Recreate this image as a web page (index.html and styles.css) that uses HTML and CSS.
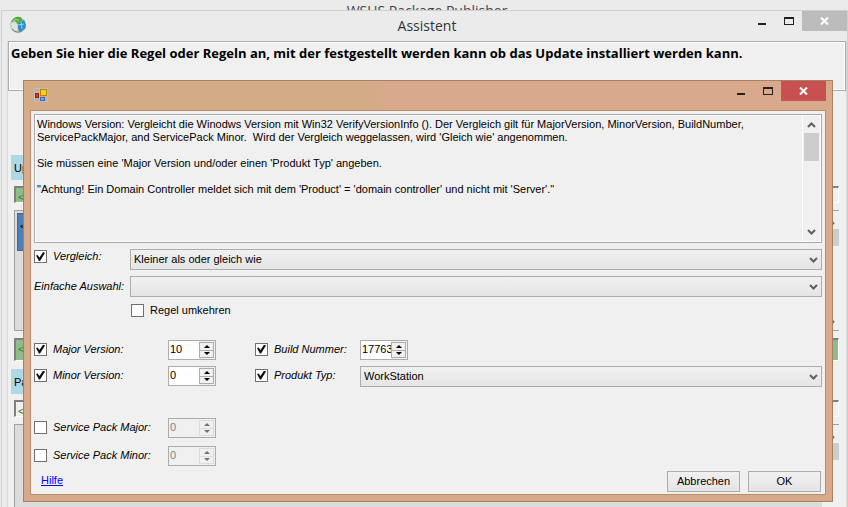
FILE: index.html
```html
<!DOCTYPE html>
<html lang="de">
  <head>
    <meta charset="UTF-8" />
    <meta name="viewport" content="width=device-width, initial-scale=1.0" />
    <title>Assistent</title>
    <link rel="stylesheet" href="styles.css">
  </head>
  <body>
    <div class="owner-title">WSUS Package Publisher</div>

    <main class="assistant">
      <header class="titlebar">
        <svg class="app-icon" viewBox="0 0 18 18" aria-hidden="true">
          <circle cx="9" cy="9" r="8" fill="#c3cac4" />
          <path d="M2 6 Q5 0 11 1 Q14 2 13 6 L9 8 L6 5 Z" fill="#4fae35" />
          <path d="M10 6 L15 4 Q18 9 16 13 L11 16 L8 11 Z" fill="#2b8fc4" />
          <path d="M2 8 L6 6 L9 10 L8 15 Q3 14 2 8Z" fill="#dfe3dd" />
          <path d="M12 5 L13 13 M9 9 L15 8" stroke="#8fd4ee" fill="none" />
          <path d="M3 13 Q7 18 13 15" stroke="#77807c" fill="none" />
          <path d="M4 5 L7 3 L10 5" stroke="#b4df7a" fill="none" />
        </svg>
        <h1 class="title">Assistent</h1>
        <div class="window-buttons">
          <button type="button" aria-label="Minimieren"><span class="min-glyph"></span></button>
          <button type="button" aria-label="Maximieren"><span class="max-glyph"></span></button>
          <button type="button" class="close" aria-label="Schließen">
            <svg viewBox="0 0 9 8"><path d="M1 0.5 L8 7.5 M8 0.5 L1 7.5" /></svg>
          </button>
        </div>
      </header>
      <div class="assistant-body">
        <p class="intro">Geben Sie hier die Regel oder Regeln an, mit der festgestellt werden kann ob das Update installiert werden kann.</p>
        <section class="rules">
          <h2 class="section-title">Up</h2>
          <div class="field short half">&lt;</div>
          <div class="list">
            <div class="list-item">&lt;</div>
            <div class="mini-scroll">
              <svg viewBox="0 0 9 6"><path d="M1 5 L4.500 1.500 L8 5" /></svg>
              <div class="mini-thumb"></div>
              <svg viewBox="0 0 9 6"><path d="M1 1 L4.500 4.500 L8 1" /></svg>
            </div>
          </div>
          <div class="field green">&lt;</div>
          <h2 class="section-title">Pa</h2>
          <div class="field short">&lt;</div>
          <div class="list last">
            <div class="mini-scroll">
              <svg viewBox="0 0 9 6"><path d="M1 5 L4.500 1.500 L8 5" /></svg>
              <div class="mini-thumb"></div>
            </div>
          </div>
        </section>
      </div>
    </main>

    <div class="dialog" role="dialog" aria-label="Windows Version">
      <header class="titlebar">
        <svg class="form-icon" viewBox="0 0 14 14" aria-hidden="true">
          <path d="M0.500 0.500H13.500V13.500H0.500Z M0.500 4.500H5.500 M5.500 0.500V13.500 M0.500 9.500H13.500 M10.500 9V13" fill="none" stroke="#b9bec0" />
          <rect x="6.500" y="1.500" width="6" height="6" fill="#ffd21f" stroke="#b98300" />
          <rect x="1.500" y="5.500" width="3" height="4" fill="#d93a28" stroke="#9e1d12" />
          <rect x="6.500" y="9.500" width="4" height="3" fill="#6fa5f5" stroke="#3569c7" />
        </svg>
        <div class="window-buttons">
          <button type="button" aria-label="Minimieren"><span class="min-glyph"></span></button>
          <button type="button" aria-label="Maximieren"><span class="max-glyph"></span></button>
          <button type="button" class="close" aria-label="Schließen">
            <svg viewBox="0 0 9 8"><path d="M1 0.5 L8 7.5 M8 0.5 L1 7.5" /></svg>
          </button>
        </div>
      </header>

      <form class="dialog-body">
        <div class="description">
          <textarea readonly aria-label="Beschreibung">
Windows Version: Vergleicht die Winodws Version mit Win32 VerifyVersionInfo (). Der Vergleich gilt für MajorVersion, MinorVersion, BuildNumber,
ServicePackMajor, and ServicePack Minor.  Wird der Vergleich weggelassen, wird 'Gleich wie' angenommen.

Sie müssen eine 'Major Version und/oder einen 'Produkt Typ' angeben.

"Achtung! Ein Domain Controller meldet sich mit dem 'Product' = 'domain controller' und nicht mit 'Server'."</textarea>
          <div class="scrollbar">
            <svg viewBox="0 0 9 6"><path d="M1 5 L4.500 1.500 L8 5" /></svg>
            <div class="thumb"></div>
            <svg class="down" viewBox="0 0 9 6"><path d="M1 1 L4.500 4.500 L8 1" /></svg>
          </div>
        </div>

        <div class="compare">
          <div class="check">
            <input type="checkbox" id="useCompare" checked />
            <label for="useCompare">Vergleich:</label>
          </div>
          <select aria-label="Vergleich">
            <option>Kleiner als oder gleich wie</option>
          </select>
          <label class="plain-label" for="simple">Einfache Auswahl:</label>
          <select id="simple">
            <option></option>
          </select>
          <div class="check invert">
            <input type="checkbox" id="invert" />
            <label for="invert">Regel umkehren</label>
          </div>
        </div>

        <div class="versions">
          <div class="check">
            <input type="checkbox" id="useMajor" checked />
            <label for="useMajor">Major Version:</label>
          </div>
          <div class="spinner">
            <input type="number" value="10" aria-label="Major Version" />
            <div class="spin-buttons">
              <button type="button" aria-label="Mehr"><span class="up"></span></button>
              <button type="button" aria-label="Weniger"><span class="dn"></span></button>
            </div>
          </div>
          <div class="check">
            <input type="checkbox" id="useBuild" checked />
            <label for="useBuild">Build Nummer:</label>
          </div>
          <div class="spinner">
            <input type="number" value="17763" aria-label="Build Nummer" />
            <div class="spin-buttons">
              <button type="button" aria-label="Mehr"><span class="up"></span></button>
              <button type="button" aria-label="Weniger"><span class="dn"></span></button>
            </div>
          </div>

          <div class="check">
            <input type="checkbox" id="useMinor" checked />
            <label for="useMinor">Minor Version:</label>
          </div>
          <div class="spinner">
            <input type="number" value="0" aria-label="Minor Version" />
            <div class="spin-buttons">
              <button type="button" aria-label="Mehr"><span class="up"></span></button>
              <button type="button" aria-label="Weniger"><span class="dn"></span></button>
            </div>
          </div>
          <div class="check">
            <input type="checkbox" id="useProduct" checked />
            <label for="useProduct">Produkt Typ:</label>
          </div>
          <select aria-label="Produkt Typ">
            <option>WorkStation</option>
          </select>
        </div>

        <div class="versions service-packs">
          <div class="check">
            <input type="checkbox" id="useSpMajor" />
            <label for="useSpMajor">Service Pack Major:</label>
          </div>
          <div class="spinner disabled">
            <input type="number" value="0" aria-label="Service Pack Major" disabled />
            <div class="spin-buttons">
              <button type="button" aria-label="Mehr" disabled><span class="up"></span></button>
              <button type="button" aria-label="Weniger" disabled><span class="dn"></span></button>
            </div>
          </div>
          <div class="check second-pack">
            <input type="checkbox" id="useSpMinor" />
            <label for="useSpMinor">Service Pack Minor:</label>
          </div>
          <div class="spinner disabled">
            <input type="number" value="0" aria-label="Service Pack Minor" disabled />
            <div class="spin-buttons">
              <button type="button" aria-label="Mehr" disabled><span class="up"></span></button>
              <button type="button" aria-label="Weniger" disabled><span class="dn"></span></button>
            </div>
          </div>
        </div>

        <footer class="actions">
          <a href="#hilfe">Hilfe</a>
          <button type="button" class="btn">Abbrechen</button>
          <button type="submit" class="btn">OK</button>
        </footer>
      </form>
    </div>
  </body>
</html>
```

FILE: styles.css
```css
:root {
  --face: #f0f0f0;
  --frame: #ebebeb;
  --line: #acacac;
  --accent: #d9a98b;
  --accent-dark: #a97f65;
}
* {
  box-sizing: border-box;
}
body {
  margin: 0;
  height: 100vh;
  overflow: hidden;
  position: relative;
  display: flex;
  flex-direction: column;
  background: var(--frame);
  color: #000;
  font-family: "Liberation Sans", Arial, sans-serif;
  font-size: 11px;
  line-height: 13px;
}
input,
select,
textarea,
button {
  font: inherit;
  color: inherit;
  margin: 0;
  border-radius: 0;
}
.owner-title {
  flex: none;
  height: 10px;
  padding-top: 2px;
  padding-left: 6px;
  overflow: hidden;
  text-align: center;
  font: 14px/18px "Open Sans", sans-serif;
  color: #444;
}

/* window chrome */
.titlebar {
  flex: none;
  display: flex;
  align-items: flex-start;
  height: 30px;
}
.title {
  flex: 1;
  margin: 0;
  padding-left: 79px;
  text-align: center;
  font: 14px/30px "Open Sans", sans-serif;
  color: #333;
}
.window-buttons {
  display: flex;
  margin-left: auto;
}
.window-buttons button {
  display: flex;
  justify-content: center;
  width: 27px;
  height: 20px;
  padding: 6px 0 0;
  border: 0;
  background: none;
}
.window-buttons .close {
  width: 45px;
  background: #bcbcbc;
}
.close svg {
  width: 9px;
  height: 8px;
  stroke: #fff;
  stroke-width: 2;
}
.min-glyph {
  width: 8px;
  height: 2px;
  margin-top: 6px;
  background: #222;
}
.max-glyph {
  width: 10px;
  height: 8px;
  border: 1px solid #222;
  border-top-width: 2px;
}

/* assistant window */
.assistant {
  flex: 1;
  min-height: 0;
  display: flex;
  flex-direction: column;
  overflow: hidden;
  margin-left: 1px;
  border-top: 1px solid #cfcfcf;
  border-left: 1px solid #cfcfcf;
  border-right: 1px solid #cfcfcf;
}
.app-icon {
  width: 18px;
  height: 18px;
  margin: 5px 0 0 7px;
}
.assistant-body {
  flex: 1;
  min-height: 0;
  display: flex;
  flex-direction: column;
  margin-left: 5px;
  border-left: 1px solid #d8d8d8;
  border-right: 1px solid #d8d8d8;
  background: var(--face);
}
.intro {
  flex: none;
  height: 50px;
  margin: 0;
  padding: 3px 2px;
  border: 1px solid var(--line);
  outline: 1px solid #fff;
  outline-offset: -2px;
  font-family: "Open Sans", "Liberation Sans", sans-serif;
  font-size: 13px;
  line-height: 16px;
  font-weight: bold;
  white-space: nowrap;
}
.rules {
  flex: 1;
  min-height: 0;
  display: flex;
  flex-direction: column;
  padding: 64px 7px 0 3px;
}
.section-title {
  flex: none;
  width: 160px;
  height: 25px;
  margin: 0;
  padding-left: 3px;
  background: #add8e6;
  font-size: 11px;
  font-weight: normal;
  line-height: 26px;
}
.field {
  flex: none;
  height: 23px;
  margin: 7px 0 8px 3px;
  padding-left: 2px;
  border: 1px solid #fff;
  border-top: 2px solid #808080;
  border-left: 2px solid #808080;
  background: var(--face);
  color: #228b22;
  line-height: 18px;
}
.field.short {
  height: 17px;
  margin: 6px 0 7px 3px;
}
.field.half {
  background: linear-gradient(to right, #8fbc8b 50%, var(--face) 50%);
}
.field.green {
  background: #8fbc8b;
}
.list {
  flex: none;
  display: flex;
  height: 121px;
  margin-left: 3px;
  border: 1px solid #a0a0a0;
  border-right: 0;
  background: #dcdcdc;
}
.list.last {
  flex: 1;
  min-height: 0;
  overflow: hidden;
  border-bottom: 0;
}
.list-item {
  width: 200px;
  height: 38px;
  margin: 2px;
  padding: 6px 2px;
  border: 1px solid #606060;
  background: #4a80b8;
}
.mini-scroll {
  width: 17px;
  margin-left: auto;
  padding-top: 8px;
  background: var(--face);
}
.mini-scroll svg {
  display: block;
  width: 9px;
  height: 6px;
  margin: 0 auto 4px;
}
.mini-thumb {
  height: 17px;
  margin-bottom: 74px;
  background: #cdcdcd;
}
.mini-scroll svg,
.scrollbar svg {
  fill: none;
  stroke: #606060;
  stroke-width: 2;
}

/* rule dialog */
.dialog {
  position: absolute;
  top: 80px;
  right: 15px;
  bottom: 5px;
  left: 23px;
  display: flex;
  flex-direction: column;
  padding: 0 6px 6px;
  border: 1px solid var(--accent-dark);
  background: var(--accent);
}
.dialog .titlebar {
  height: 29px;
  margin-left: -6px;
  background: linear-gradient(to right, #d4ab87 358px, var(--accent) 358px);
}
.form-icon {
  width: 14px;
  height: 14px;
  margin: 7px 0 0 10px;
}
.dialog .close {
  background: #c75050;
}
.dialog-body {
  flex: 1;
  min-height: 0;
  padding: 3px;
  border: 1px solid #b88d70;
  background: var(--face);
}
.description {
  display: flex;
  height: 129px;
  border: 1px solid #a9a9b0;
  padding: 1px;
  outline: 1px solid #fff;
  outline-offset: -2px;
}
.description textarea {
  flex: 1;
  min-width: 0;
  padding: 2px 1px;
  border: 0;
  resize: none;
  overflow: hidden;
  white-space: pre;
  background: var(--face);
}
.scrollbar {
  display: flex;
  flex-direction: column;
  align-items: center;
  width: 18px;
  padding: 6px 1px;
  border-left: 1px solid #fff;
}
.scrollbar svg {
  width: 9px;
  height: 6px;
}
.thumb {
  width: 15px;
  height: 28px;
  margin-top: 5px;
  background: #cdcdcd;
}
.scrollbar .down {
  margin-top: auto;
}

/* form controls */
.check {
  display: flex;
  align-items: center;
  gap: 6px;
}
.check label,
.plain-label {
  font-style: italic;
  white-space: nowrap;
}
input[type="checkbox"] {
  appearance: none;
  flex: none;
  width: 13px;
  height: 13px;
  border: 1px solid #707070;
  background: #fff;
}
input[type="checkbox"]:checked::after {
  content: "";
  display: block;
  width: 9px;
  height: 9px;
  margin: 1px;
  background: #111;
  clip-path: polygon(0 40%, 18% 32%, 38% 62%, 80% 0, 100% 10%, 45% 100%, 32% 100%);
}
select {
  appearance: none;
  width: 100%;
  height: 21px;
  padding: 0 20px 0 3px;
  border: 1px solid var(--line);
  background:
    url("data:image/svg+xml,%3Csvg xmlns='http://www.w3.org/2000/svg' width='9' height='6'%3E%3Cpath d='M1 1L4.500 4.500L8 1' fill='none' stroke='%23606060' stroke-width='2'/%3E%3C/svg%3E") no-repeat right 3px center,
    linear-gradient(#f0f0f0, #e5e5e5);
}
.compare {
  display: grid;
  grid-template-columns: 96px 1fr;
  row-gap: 6px;
  margin-top: 6px;
}
.compare .check {
  padding-bottom: 6px;
}
.plain-label {
  padding-top: 4px;
}
.compare .invert {
  grid-column: 2;
  padding: 1px 0 0 1px;
}
.invert label {
  font-style: normal;
}
.versions {
  display: grid;
  grid-template-columns: 134px 87px 105px 1fr;
  grid-auto-rows: 20px;
  row-gap: 6px;
  margin-top: 23px;
}
.versions .check {
  padding-bottom: 2px;
}
.spinner {
  display: flex;
  width: 48px;
  border: 1px solid var(--line);
  background: #fff;
}
.spinner input {
  appearance: textfield;
  width: 30px;
  padding: 0 0 2px 1px;
  border: 0;
  background: none;
}
.spinner input::-webkit-inner-spin-button {
  display: none;
}
.spin-buttons {
  display: flex;
  flex-direction: column;
  width: 16px;
  padding: 1px 1px 1px 0;
  background: var(--face);
}
.spin-buttons button {
  flex: 1;
  display: flex;
  align-items: center;
  justify-content: center;
  padding: 0;
  border: 1px solid var(--line);
  background: var(--face);
}
.spin-buttons button + button {
  border-top: 0;
}
.up,
.dn {
  border: 3px solid transparent;
}
.up {
  border-top: 0;
  border-bottom-color: #000;
}
.dn {
  border-bottom: 0;
  border-top-color: #000;
}
.spinner.disabled {
  background: var(--face);
  color: #808080;
}
.disabled button {
  border-color: #dcdcdc;
}
.disabled .up {
  border-bottom-color: #707070;
}
.disabled .dn {
  border-top-color: #707070;
}
.service-packs {
  row-gap: 8px;
  margin-top: 32px;
}
.second-pack {
  grid-column: 1;
}
.actions {
  display: flex;
  align-items: flex-start;
  gap: 8px;
  margin-top: 5px;
  padding-right: 1px;
}
.actions a {
  margin: 3px auto 0 7px;
  color: #0000ff;
}
.btn {
  width: 73px;
  height: 21px;
  padding: 0;
  border: 1px solid var(--line);
  background: linear-gradient(#f0f0f0, #e5e5e5);
}
```
